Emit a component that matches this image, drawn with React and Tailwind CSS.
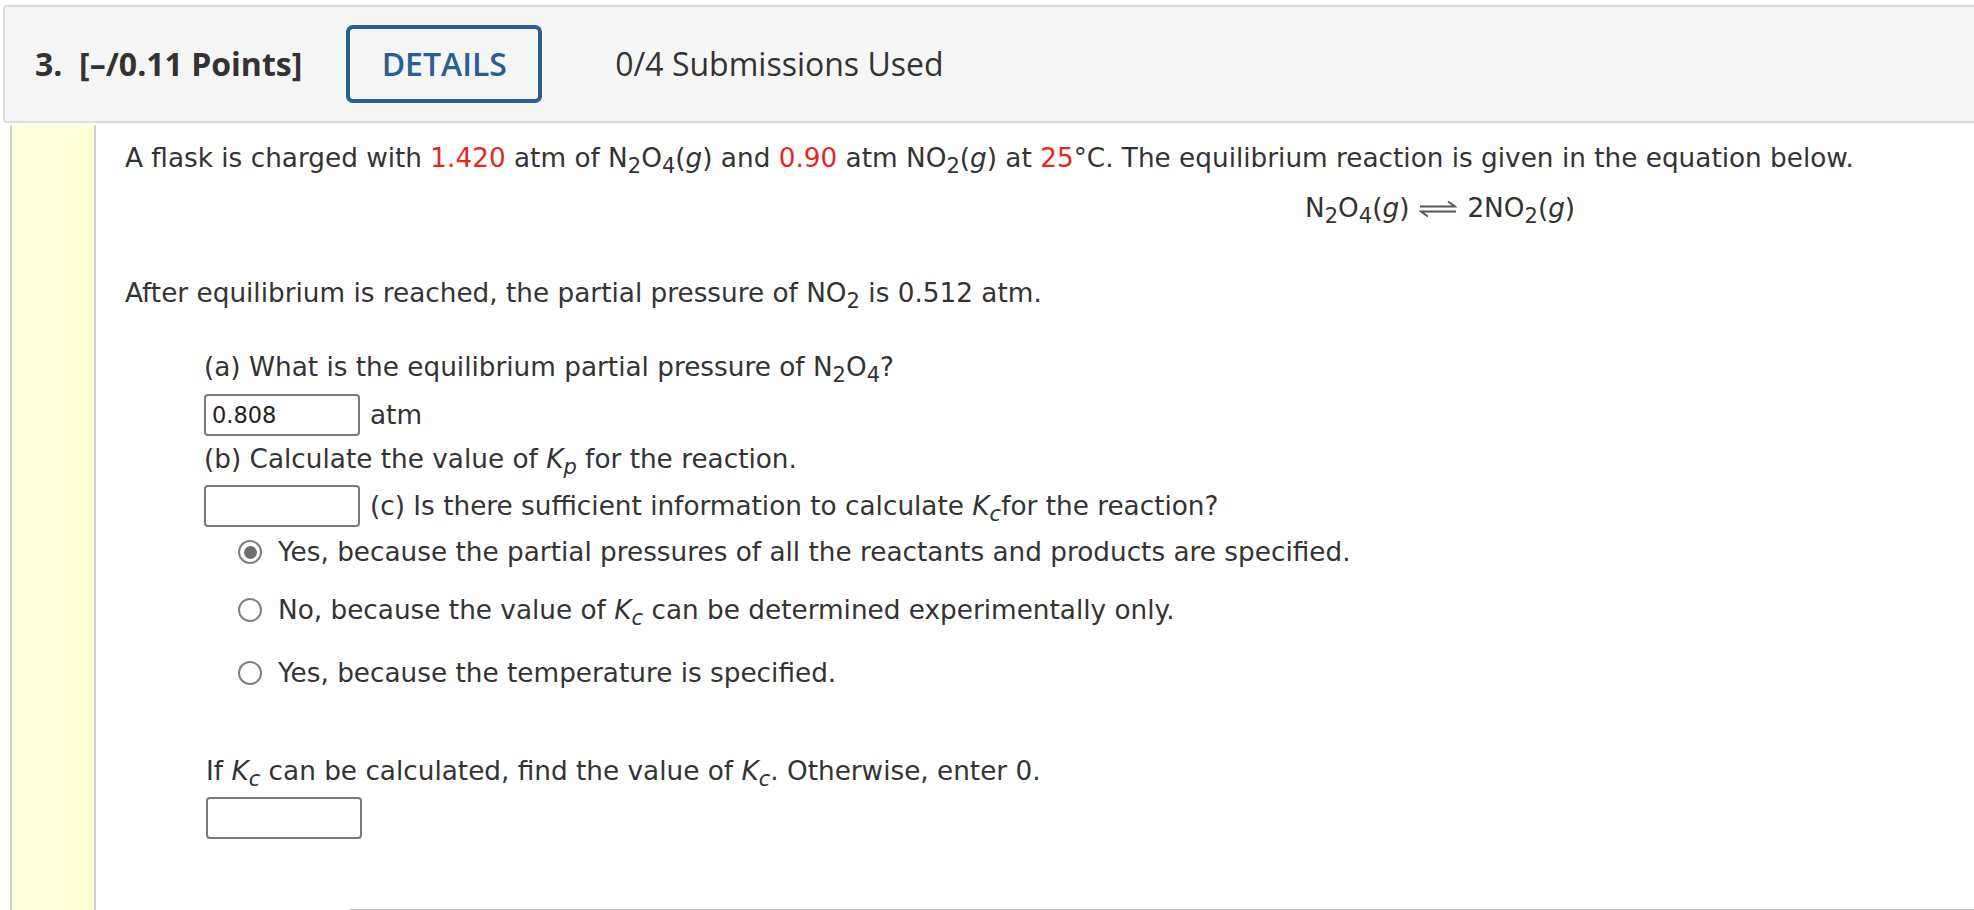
import React from "react";

const body = { fontFamily: '"DejaVu Sans", Verdana, sans-serif' };

function Sub({ children }) {
  return <sub className="text-[0.8em] relative top-[0.3em] align-baseline">{children}</sub>;
}

function Red({ children }) {
  return <span className="text-[#e5281e]">{children}</span>;
}

function K({ sub }) {
  return (
    <span>
      <i>K</i>
      <sub className="text-[0.8em] italic align-baseline relative top-[0.3em]">{sub}</sub>
    </span>
  );
}

// equilibrium harpoons
function Harpoons() {
  return (
    <svg width="38" height="18" viewBox="0 0 38 18" className="inline-block align-baseline mx-[10px] relative top-[1px]">
      <path d="M1 6.5 H36 L29 1.5" fill="none" stroke="#555" strokeWidth="1.8" />
      <path d="M37 11.5 H2 L9 16.5" fill="none" stroke="#555" strokeWidth="1.8" />
    </svg>
  );
}

function Radio({ checked }) {
  return (
    <span className="w-[24px] h-[24px] rounded-full border-2 border-[#808080] bg-white flex items-center justify-center shrink-0">
      {checked && <span className="w-[13px] h-[13px] rounded-full bg-[#6e6e6e]" />}
    </span>
  );
}

function Box({ value }) {
  return (
    <div
      className="w-[156px] h-[42px] border-2 border-[#7a7a7a] rounded-[4px] bg-white px-[6px] flex items-center text-[22.5px] text-[#222] shrink-0"
      style={body}
    >
      {value}
    </div>
  );
}

const choices = [
  { label: "Yes, because the partial pressures of all the reactants and products are specified.", checked: true, mt: "mt-[7px]" },
  { label: null, checked: false, mt: "mt-[22px]" },
  { label: "Yes, because the temperature is specified.", checked: false, mt: "mt-[27px]" },
];

export default function App() {
  return (
    <div className="w-[1974px] h-[910px] bg-white overflow-hidden text-[#333]">
      {/* header */}
      <div
        className="ml-[3px] mt-[5px] mr-[-20px] h-[118px] border-2 border-[#dcdcdc] rounded-[4px] bg-[#f6f6f6] flex items-center pl-[30px] text-[32px]"
        style={{ fontFamily: '"Open Sans", sans-serif' }}
      >
        <span className="font-bold text-[#333]">3.&nbsp; [–/0.11 Points]</span>
        <button className="ml-[44px] w-[196px] h-[78px] border-4 border-[#2b5f93] rounded-[7px] text-[#2b5f93] font-semibold bg-transparent">
          DETAILS
        </button>
        <span className="ml-[73px] text-[#333]">0/4 Submissions Used</span>
      </div>

      <div className="flex mt-[2px]">
        <div className="ml-[10px] w-[86px] h-[790px] bg-[#ffffd8] border-x-2 border-[#d0d0d0] shrink-0" />

        <div className="pl-[29px] pt-[15px] text-[26.3px] leading-[36px] flex-1" style={body}>
          <p className="whitespace-nowrap">
            A flask is charged with <Red>1.420</Red> atm of N<Sub>2</Sub>O<Sub>4</Sub>(<i>g</i>) and <Red>0.90</Red> atm NO
            <Sub>2</Sub>(<i>g</i>) at <Red>25</Red>°C. The equilibrium reaction is given in the equation below.
          </p>
          <p className="mt-[14px] ml-[1180px] whitespace-nowrap">
            N<Sub>2</Sub>O<Sub>4</Sub>(<i>g</i>)<Harpoons />2NO<Sub>2</Sub>(<i>g</i>)
          </p>
          <p className="mt-[49px] whitespace-nowrap">
            After equilibrium is reached, the partial pressure of NO<Sub>2</Sub> is 0.512 atm.
          </p>

          <div className="ml-[79px]">
            <p className="mt-[38px]">
              (a) What is the equilibrium partial pressure of N<Sub>2</Sub>O<Sub>4</Sub>?
            </p>
            <div className="mt-[9px] flex items-center gap-[10px]">
              <Box value="0.808" />
              <span>atm</span>
            </div>
            <p className="mt-[5px]">
              (b) Calculate the value of <K sub="p" /> for the reaction.
            </p>
            <div className="mt-[8px] flex items-center gap-[10px]">
              <Box value="" />
              <span>
                (c) Is there sufficient information to calculate <K sub="c" />for the reaction?
              </span>
            </div>

            <div className="ml-[34px]">
              {choices.map((c, i) => (
                <div key={i} className={`${c.mt} flex items-center gap-[16px]`}>
                  <Radio checked={c.checked} />
                  <span>
                    {c.label ?? (
                      <>
                        No, because the value of <K sub="c" /> can be determined experimentally only.
                      </>
                    )}
                  </span>
                </div>
              ))}
            </div>

            <p className="mt-[62px] ml-[2px]">
              If <K sub="c" /> can be calculated, find the value of <K sub="c" />. Otherwise, enter 0.
            </p>
            <div className="mt-[8px] ml-[2px]">
              <Box value="" />
            </div>
          </div>

          <div className="mt-[70px] ml-[225px] h-[20px] border-t-2 border-[#c8c8c8] bg-[#fbfbe6]" />
        </div>
      </div>
    </div>
  );
}
